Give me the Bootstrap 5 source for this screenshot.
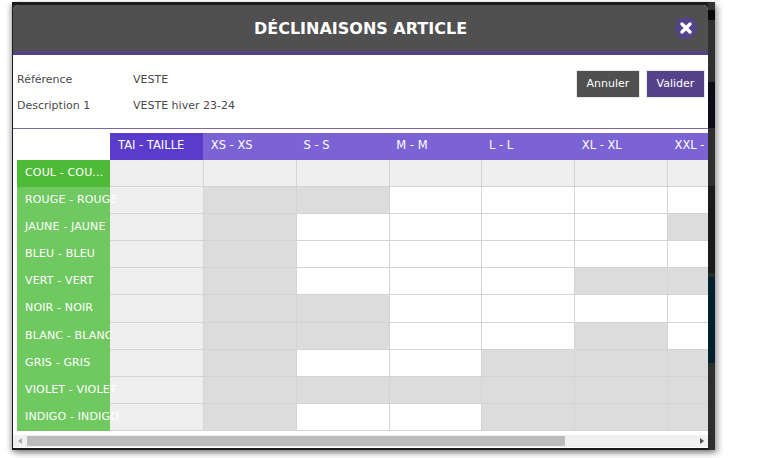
<!DOCTYPE html>
<html lang="fr"><head><meta charset="utf-8">
<title>Déclinaisons article</title>
<link href="https://cdn.jsdelivr.net/npm/bootstrap@5.3.0/dist/css/bootstrap.min.css" rel="stylesheet">
<style>
html,body{height:100%;background:#fff;overflow:hidden}
body{font-family:Tahoma,"DejaVu Sans",sans-serif;font-size:11px;color:#4a4a4a}
.shot{width:703px;height:448px;margin:2px 0 0 12px;background-color:#1c1c1c;background-image:linear-gradient(#333 0 8px,#0a0a0a 8px 18px,#303030 18px 80px,#0e0c18 80px 126px,#2d2d2d 126px 184px,#1a1a1a 184px 271px,#2a2a2a 271px 275px,#02202e 275px 361px,#2d2d2d 361px);background-size:7px 100%;background-position:right top;background-repeat:no-repeat;box-shadow:3px 3px 6px rgba(0,0,0,.35),-2px 2px 5px rgba(0,0,0,.25);padding:3px 7px 2px 1px}
.dlg{height:443px;background:#fff;border-radius:5px 5px 0 0;overflow:hidden}
.dlg-head{height:50px;background:#505050;border-bottom:4px solid #55438a;color:#fff;position:relative;padding-top:1px}
.dlg-title{font-size:16px;font-weight:700}
.dlg-x{position:absolute;right:11px;top:12px;width:22px;height:22px;border-radius:50%;background:#55438a}
.info{height:74px;border-bottom:1px solid #7a68a8;padding:0 4px}
.info-line{height:26px}
.info-lab{width:116px}
.btn-a,.btn-v{font-size:11px;color:#fff;height:26px;padding:0;border-radius:0;border:0;box-shadow:0 0 0 1px #e8e8e8;line-height:26px}
.btn-a{width:62px;background:#505050}
.btn-v{width:57px;background:#55438a}
.btn-a:hover{background:#505050;color:#fff}.btn-v:hover{background:#55438a;color:#fff}
.gridwrap{height:306px;padding-top:4px;overflow:hidden}
.rowline{display:flex;height:27.1px;margin-left:4px}
.rowline.top{height:27px}
.cc{flex:none;width:92.75px;box-sizing:border-box;border-left:1px solid #d4d4d4;border-bottom:1px solid #d4d4d4;background:#fff}
.cc.g{background:#dcdcdc}.cc.l{background:#efefef}
.cc.f{width:93px;border-left:0}
.rl{flex:none;width:93px;padding-left:8px;background:#6fc860;color:#fff;line-height:25.2px;letter-spacing:.15px;white-space:nowrap;position:relative;z-index:1;overflow:visible}
.rl.h{background:#4fba38}
.corner{flex:none;width:93px}
.th{flex:none;width:92.75px;padding-left:8px;background:#7b63d6;color:#fff;font-size:11.5px;line-height:24px;white-space:nowrap;overflow:hidden}
.th.first{background:#5a3ccc}
.sbar{height:12px;background:#f0f0f0;position:relative}
.sthumb{position:absolute;left:14px;top:1px;width:538px;height:10px;background:#bcbcbc}
.arr{position:absolute;top:3px;width:0;height:0;border-top:3px solid transparent;border-bottom:3px solid transparent}
.arr.lf{left:5px;border-right:4px solid #aaa}
.arr.rt{right:4px;border-left:4px solid #505050}
</style></head><body>
<div class="shot"><div class="dlg">
<div class="dlg-head d-flex align-items-center justify-content-center"><span class="dlg-title">DÉCLINAISONS ARTICLE</span>
<span class="dlg-x d-flex align-items-center justify-content-center"><svg width="14" height="14" viewBox="0 0 14 14"><path d="M3 3l8 8M11 3l-8 8" stroke="#fff" stroke-width="3.4" stroke-linecap="round"/></svg></span></div>
<div class="info d-flex justify-content-between">
<div class="pt-2 mt-1"><div class="d-flex info-line align-items-center"><span class="info-lab">Référence</span><span>VESTE</span></div>
<div class="d-flex info-line align-items-center"><span class="info-lab">Description 1</span><span>VESTE hiver 23-24</span></div></div>
<div class="d-flex gap-2 pt-3"><button class="btn btn-a" type="button">Annuler</button><button class="btn btn-v" type="button">Valider</button></div>
</div>
<div class="gridwrap" id="g"></div>
<div class="sbar"><span class="arr lf"></span><span class="sthumb"></span><span class="arr rt"></span></div>
</div></div>
<script>
var h=['XS - XS','S - S','M - M','L - L','XL - XL','XXL - XXL'];
var r=[['ROUGE - ROUGE','ggwwww'],['JAUNE - JAUNE','gwwwwg'],['BLEU - BLEU','gwwwww'],['VERT - VERT','gwwwgg'],['NOIR - NOIR','ggwwww'],['BLANC - BLANC','ggwwgw'],['GRIS - GRIS','gwwggg'],['VIOLET - VIOLET','gggggg'],['INDIGO - INDIGO','gwwggg']];
var s='<div class="rowline top"><div class="corner"></div><div class="th first">TAI - TAILLE</div>'+h.map(function(x){return '<div class="th">'+x+'</div>'}).join('')+'</div>';
function cells(c){return c.split('').map(function(k){return '<div class="cc '+(k=='g'?'g':k=='l'?'l':'')+'"></div>'}).join('')}
s+='<div class="rowline"><div class="rl h">COUL - COU...</div><div class="cc l f"></div>'+cells('llllll')+'</div>';
r.forEach(function(x){s+='<div class="rowline"><div class="rl">'+x[0]+'</div><div class="cc l f"></div>'+cells(x[1])+'</div>'});
document.getElementById('g').innerHTML=s;
</script>
<script src="https://cdn.jsdelivr.net/npm/bootstrap@5.3.0/dist/js/bootstrap.bundle.min.js"></script>
</body></html>
